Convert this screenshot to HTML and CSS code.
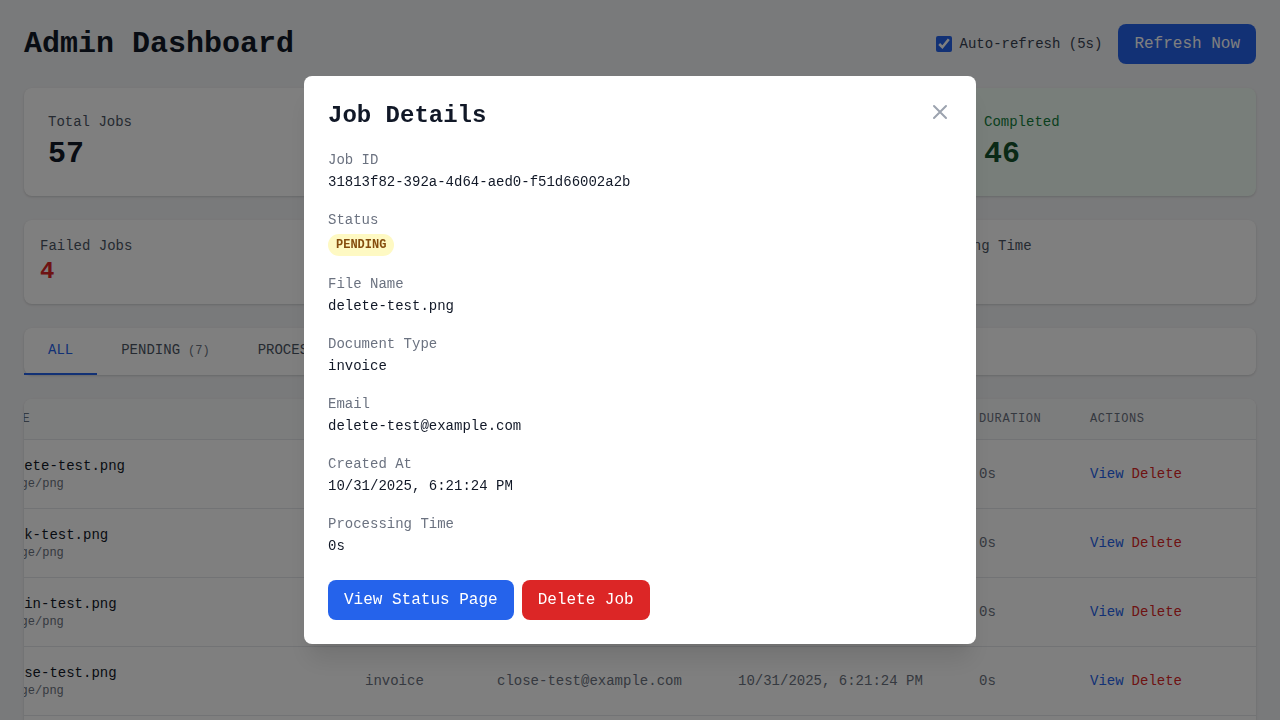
FILE: index.html
```html
<!DOCTYPE html>
<html lang="en">
<head>
<meta charset="utf-8">
<title>Admin Dashboard</title>
<link rel="stylesheet" href="styles.css">
</head>
<body>
<div class="page">
  <header class="topbar">
    <h1 class="title">Admin Dashboard</h1>
    <div class="controls">
      <label class="auto"><input type="checkbox" class="check" checked><span>Auto-refresh (5s)</span></label>
      <button class="btn btn-blue">Refresh Now</button>
    </div>
  </header>

  <section class="stats stats-4">
    <div class="card stat-lg">
      <div class="stat-label">Total Jobs</div>
      <div class="stat-value">57</div>
    </div>
    <div class="card stat-lg tint-yellow">
      <div class="stat-label">Pending</div>
      <div class="stat-value">7</div>
    </div>
    <div class="card stat-lg tint-blue">
      <div class="stat-label">Processing</div>
      <div class="stat-value">0</div>
    </div>
    <div class="card stat-lg tint-green">
      <div class="stat-label">Completed</div>
      <div class="stat-value">46</div>
    </div>
  </section>

  <section class="stats stats-3">
    <div class="card stat-sm">
      <div class="stat-label">Failed Jobs</div>
      <div class="stat-value-sm red">4</div>
    </div>
    <div class="card stat-sm">
      <div class="stat-label">Success Rate</div>
      <div class="stat-value-sm">80.7%</div>
    </div>
    <div class="card stat-sm">
      <div class="stat-label">Avg Processing Time</div>
      <div class="stat-value-sm">0s</div>
    </div>
  </section>

  <nav class="card tabs">
    <a class="tab active">ALL</a>
    <a class="tab">PENDING<span class="count">(7)</span></a>
    <a class="tab">PROCESSING<span class="count">(0)</span></a>
    <a class="tab">COMPLETED<span class="count">(46)</span></a>
    <a class="tab">FAILED<span class="count">(4)</span></a>
  </nav>

  <div class="card table-card">
    <div class="table-scroll">
      <table class="jobs">
        <colgroup>
          <col class="c-file"><col class="c-doc"><col class="c-email"><col class="c-created"><col class="c-dur"><col class="c-act">
        </colgroup>
        <thead>
          <tr><th>File</th><th>Type</th><th>Email</th><th>Created</th><th>Duration</th><th>Actions</th></tr>
        </thead>
        <tbody>
          <tr>
            <td><div class="fname">delete-test.png</div><div class="mime">image/png</div></td>
            <td class="muted">invoice</td>
            <td class="muted">delete-test@example.com</td>
            <td class="muted">10/31/2025, 6:21:24 PM</td>
            <td class="muted">0s</td>
            <td><a class="act view">View</a><a class="act del">Delete</a></td>
          </tr>
          <tr>
            <td><div class="fname">back-test.png</div><div class="mime">image/png</div></td>
            <td class="muted">invoice</td>
            <td class="muted">back-test@example.com</td>
            <td class="muted">10/31/2025, 6:21:24 PM</td>
            <td class="muted">0s</td>
            <td><a class="act view">View</a><a class="act del">Delete</a></td>
          </tr>
          <tr>
            <td><div class="fname">admin-test.png</div><div class="mime">image/png</div></td>
            <td class="muted">invoice</td>
            <td class="muted">admin-test@example.com</td>
            <td class="muted">10/31/2025, 6:21:24 PM</td>
            <td class="muted">0s</td>
            <td><a class="act view">View</a><a class="act del">Delete</a></td>
          </tr>
          <tr>
            <td><div class="fname">close-test.png</div><div class="mime">image/png</div></td>
            <td class="muted">invoice</td>
            <td class="muted">close-test@example.com</td>
            <td class="muted">10/31/2025, 6:21:24 PM</td>
            <td class="muted">0s</td>
            <td><a class="act view">View</a><a class="act del">Delete</a></td>
          </tr>
          <tr>
            <td><div class="fname">modal-test.png</div><div class="mime">image/png</div></td>
            <td class="muted">invoice</td>
            <td class="muted">modal-test@example.com</td>
            <td class="muted">10/31/2025, 6:21:24 PM</td>
            <td class="muted">0s</td>
            <td><a class="act view">View</a><a class="act del">Delete</a></td>
          </tr>
        </tbody>
      </table>
    </div>
  </div>
</div>

<div class="overlay">
  <div class="modal">
    <div class="modal-head">
      <h2 class="modal-title">Job Details</h2>
      <button class="close" aria-label="Close">
        <svg width="24" height="24" viewBox="0 0 24 24" fill="none" stroke="currentColor" stroke-width="2" stroke-linecap="round" stroke-linejoin="round"><path d="M6 18L18 6M6 6l12 12"/></svg>
      </button>
    </div>
    <div class="field">
      <div class="f-label">Job ID</div>
      <div class="f-value">31813f82-392a-4d64-aed0-f51d66002a2b</div>
    </div>
    <div class="field">
      <div class="f-label">Status</div>
      <div class="f-pill"><span class="pill pill-pending">PENDING</span></div>
    </div>
    <div class="field">
      <div class="f-label">File Name</div>
      <div class="f-value">delete-test.png</div>
    </div>
    <div class="field">
      <div class="f-label">Document Type</div>
      <div class="f-value">invoice</div>
    </div>
    <div class="field">
      <div class="f-label">Email</div>
      <div class="f-value">delete-test@example.com</div>
    </div>
    <div class="field">
      <div class="f-label">Created At</div>
      <div class="f-value">10/31/2025, 6:21:24 PM</div>
    </div>
    <div class="field">
      <div class="f-label">Processing Time</div>
      <div class="f-value">0s</div>
    </div>
    <div class="modal-actions">
      <button class="btn btn-blue">View Status Page</button>
      <button class="btn btn-red">Delete Job</button>
    </div>
  </div>
</div>
</body>
</html>
```
FILE: styles.css
```css
* { box-sizing: border-box; }
html, body { margin: 0; padding: 0; }
body {
  background: #f3f4f6;
  font-family: "Liberation Mono", "DejaVu Sans Mono", monospace;
  color: #111827;
  font-size: 14px;
}
.page { padding: 24px; }

.topbar {
  display: flex;
  justify-content: space-between;
  align-items: center;
  margin-bottom: 24px;
}
.title {
  margin: 0;
  font-size: 30px;
  line-height: 36px;
  font-weight: 700;
  color: #111827;
}
.controls { display: flex; align-items: center; gap: 16px; }
.auto { display: flex; align-items: center; gap: 8px; font-size: 14px; line-height: 20px; color: #374151; }
.check { width: 16px; height: 16px; margin: 0; accent-color: #2563eb; }

.btn {
  font-family: inherit;
  font-size: 16px;
  line-height: 24px;
  padding: 8px 16px;
  border: 0;
  border-radius: 8px;
  color: #ffffff;
  cursor: pointer;
}
.btn-blue { background: #2563eb; }
.btn-red { background: #dc2626; }

.card {
  background: #ffffff;
  border-radius: 8px;
  box-shadow: 0 1px 3px rgba(0,0,0,0.1), 0 1px 2px rgba(0,0,0,0.06);
}

.stats { display: grid; gap: 16px; margin-bottom: 24px; }
.stats-4 { grid-template-columns: repeat(4, 1fr); }
.stats-3 { grid-template-columns: repeat(3, 1fr); }
.stat-lg { padding: 24px; }
.stat-sm { padding: 16px; }
.stat-label { font-size: 14px; line-height: 20px; color: #4b5563; }
.stat-value { margin-top: 4px; font-size: 30px; line-height: 36px; font-weight: 700; color: #111827; }
.stat-value-sm { font-size: 24px; line-height: 32px; font-weight: 700; color: #111827; }
.red { color: #dc2626; }
.tint-yellow { background: #fefce8; }
.tint-yellow .stat-label { color: #a16207; }
.tint-yellow .stat-value { color: #713f12; }
.tint-blue { background: #eff6ff; }
.tint-blue .stat-label { color: #1d4ed8; }
.tint-blue .stat-value { color: #1e3a8a; }
.tint-green { background: #f0fdf4; }
.tint-green .stat-label { color: #15803d; }
.tint-green .stat-value { color: #14532d; }

.tabs { display: flex; margin-bottom: 24px; }
.tab {
  padding: 12px 24px;
  font-size: 14px;
  line-height: 20px;
  color: #4b5563;
  border-bottom: 2px solid transparent;
}
.tab.active { color: #2563eb; border-bottom-color: #2563eb; }
.count { margin-left: 8px; font-size: 12px; color: #6b7280; }

.table-card { overflow: hidden; }
.table-scroll { overflow: hidden; }
.jobs {
  width: 1281px;
  margin-left: -49px;
  table-layout: fixed;
  border-collapse: collapse;
}
.c-file { width: 366px; }
.c-doc { width: 132px; }
.c-email { width: 241px; }
.c-created { width: 241px; }
.c-dur { width: 111px; }
.c-act { width: 190px; }
.jobs th {
  background: #f9fafb;
  text-align: left;
  padding: 12px 24px;
  font-size: 12px;
  line-height: 16px;
  font-weight: 400;
  letter-spacing: 0.05em;
  text-transform: uppercase;
  color: #6b7280;
  border-bottom: 1px solid #e5e7eb;
  white-space: nowrap;
}
.jobs td {
  padding: 16px 24px;
  vertical-align: middle;
  border-bottom: 1px solid #e5e7eb;
  white-space: nowrap;
  font-size: 14px;
  line-height: 20px;
}
.fname { color: #111827; }
.mime { font-size: 12px; line-height: 16px; color: #6b7280; }
.muted { color: #6b7280; }
.act { font-size: 14px; }
.view { color: #2563eb; margin-right: 8px; }
.del { color: #dc2626; }

.pill {
  display: inline-block;
  padding: 3px 8px;
  border-radius: 9999px;
  font-size: 12px;
  line-height: 16px;
  font-weight: 700;
}
.pill-pending { background: #fef9c3; color: #854d0e; }

.overlay {
  position: fixed;
  inset: 0;
  background: rgba(0,0,0,0.5);
  display: flex;
  align-items: center;
  justify-content: center;
}
.modal {
  width: 672px;
  background: #ffffff;
  border-radius: 8px;
  padding: 24px;
  box-shadow: 0 20px 25px -5px rgba(0,0,0,0.1), 0 10px 10px -5px rgba(0,0,0,0.04);
}
.modal-head {
  display: flex;
  justify-content: space-between;
  align-items: flex-start;
  margin-bottom: 18px;
}
.modal-title { margin: 0; font-size: 24px; line-height: 32px; font-weight: 700; color: #111827; }
.close {
  border: 0;
  background: transparent;
  padding: 0;
  width: 24px;
  height: 24px;
  color: #9ca3af;
  display: flex;
}
.field + .field { margin-top: 18px; }
.f-label { font-size: 14px; line-height: 20px; color: #6b7280; }
.f-value { margin-top: 2px; font-size: 14px; line-height: 20px; color: #111827; }
.f-pill { margin-top: 4px; display: flex; }
.modal-actions { display: flex; gap: 8px; margin-top: 24px; }
```
